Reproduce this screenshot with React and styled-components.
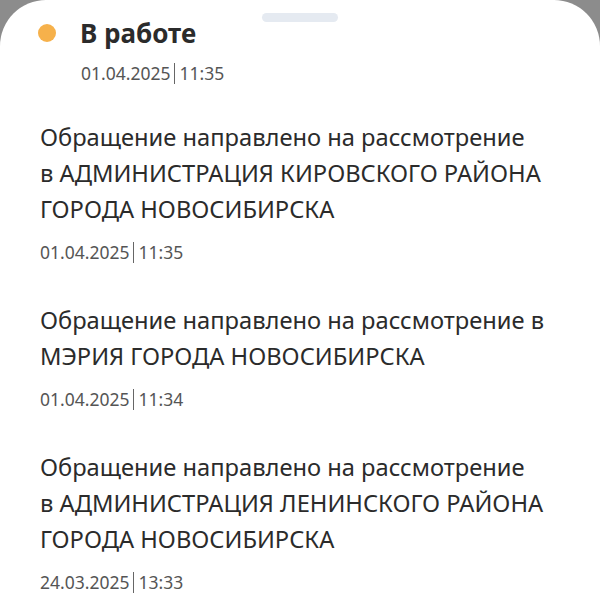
import React from 'react'
import styled, { createGlobalStyle } from 'styled-components'

const GlobalStyle = createGlobalStyle`
    html, body {
        margin: 0;
        padding: 0;
        background: #8c8c8c;
    }
    body {
        font-family: "Noto Sans", "Open Sans", sans-serif;
    }
`

const items = [
    {
        text: 'Обращение направлено на рассмотрение\nв АДМИНИСТРАЦИЯ КИРОВСКОГО РАЙОНА\nГОРОДА НОВОСИБИРСКА',
        date: '01.04.2025',
        time: '11:35',
    },
    {
        text: 'Обращение направлено на рассмотрение в\nМЭРИЯ ГОРОДА НОВОСИБИРСКА',
        date: '01.04.2025',
        time: '11:34',
    },
    {
        text: 'Обращение направлено на рассмотрение\nв АДМИНИСТРАЦИЯ ЛЕНИНСКОГО РАЙОНА\nГОРОДА НОВОСИБИРСКА',
        date: '24.03.2025',
        time: '13:33',
    },
]

function Stamp({ date, time }) {
    return (
        <DateLine>
            {date}<Bar />{time}
        </DateLine>
    )
}

export default function App() {
    return (
        <>
            <GlobalStyle />
            <Sheet>
                <Handle />
                <Status>
                    <Dot />
                    <StatusTitle>В работе</StatusTitle>
                </Status>
                <StatusDate>
                    <Stamp date="01.04.2025" time="11:35" />
                </StatusDate>
                <List>
                    {items.map((it, i) => (
                        <Item key={i}>
                            <ItemText>{it.text}</ItemText>
                            <Stamp date={it.date} time={it.time} />
                        </Item>
                    ))}
                </List>
            </Sheet>
        </>
    )
}

const Sheet = styled.div`
    width: 600px;
    height: 600px;
    box-sizing: border-box;
    background: #fff;
    border-radius: 46px 46px 0 0;
    padding: 13px 0 0 40px;
    overflow: hidden;
    display: flex;
    flex-direction: column;
`

const Handle = styled.div`
    align-self: center;
    margin-left: -40px;
    width: 76px;
    height: 9px;
    border-radius: 5px;
    background: #e5eaf1;
`

const Status = styled.div`
    display: flex;
    align-items: center;
    gap: 24px;
    margin-top: -7px;
    margin-left: -2px;
    height: 36px;
`

const Dot = styled.div`
    width: 18px;
    height: 18px;
    border-radius: 50%;
    background: #f6b14b;
`

const StatusTitle = styled.div`
    font-size: 26px;
    font-weight: 700;
    color: #2b2b2b;
    line-height: 36px;
`

const StatusDate = styled.div`
    margin: 10px 0 0 41px;
`

const DateLine = styled.div`
    display: flex;
    align-items: center;
    font-size: 17.5px;
    color: #555;
    line-height: 24px;
`

const Bar = styled.span`
    display: inline-block;
    width: 1px;
    height: 21px;
    background: #666;
    margin: 0 4px;
`

const List = styled.div`
    display: flex;
    flex-direction: column;
    gap: 38px;
    margin-top: 34px;
`

const Item = styled.div`
    display: flex;
    flex-direction: column;
    gap: 13px;
`

const ItemText = styled.div`
    white-space: pre-line;
    font-size: 23.7px;
    line-height: 36px;
    color: #2b2b2b;
`
